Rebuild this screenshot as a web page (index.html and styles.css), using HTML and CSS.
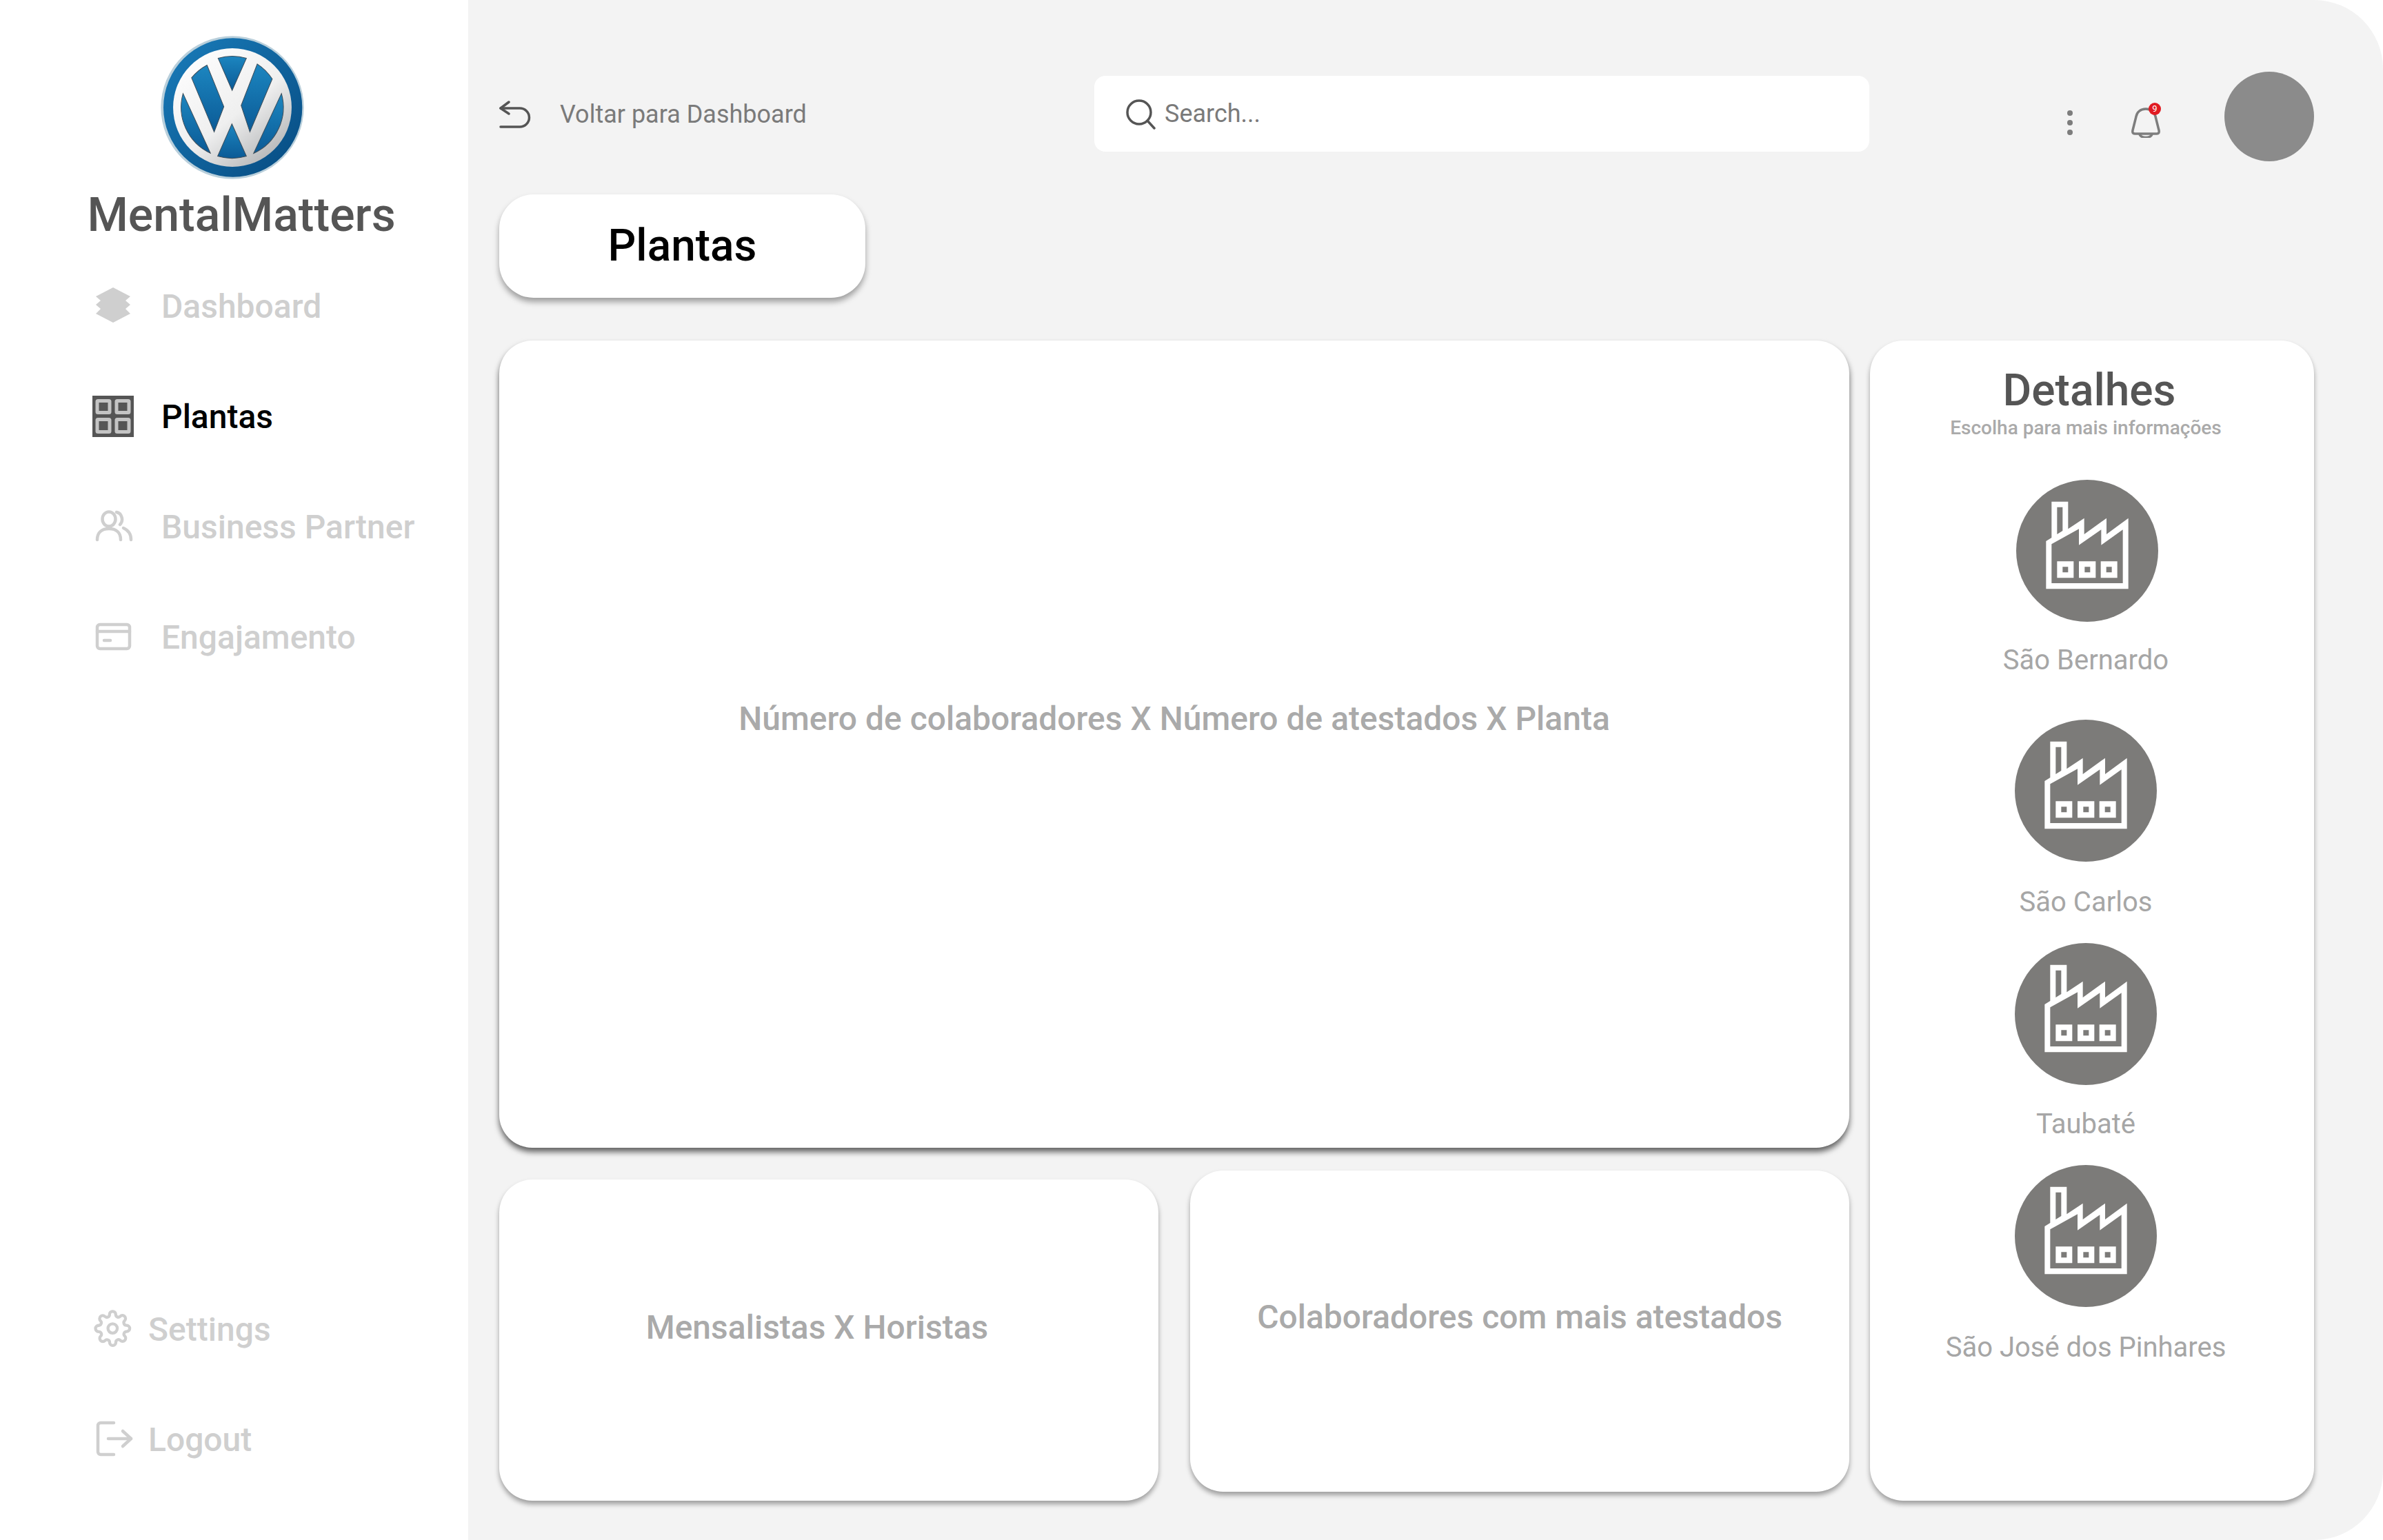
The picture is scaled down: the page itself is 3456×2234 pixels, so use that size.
FILE: index.html
```html
<!DOCTYPE html>
<html lang="pt-BR">
<head>
  <meta charset="UTF-8">
  <title>MentalMatters - Plantas</title>
  <link rel="stylesheet" href="styles.css">
</head>
<body>
  <svg class="sprite" width="0" height="0">
    <!-- icone de fabrica usado nas plantas -->
    <symbol id="factory" viewBox="132 48 618 618">
      <circle cx="441" cy="357" r="309" fill="#7c7b79"/>
      <path fill="#fff" fill-rule="evenodd" d="M262 523H620V215L525 285V215L428 285V215L358 262V143H286V300L262 315ZM286 328L405 262V332L502 265V332L596 265V498H286ZM310 167H334V270L310 285ZM310 403H382V475H310ZM334 427V451H358V427ZM405 403H478V475H405ZM430 427V451H454V427ZM500 403H572V475H500ZM524 427V451H548V427Z"/>
    </symbol>
  </svg>

  <div class="app">
    <!-- Menu lateral -->
    <aside class="sidebar">
      <svg class="logo" viewBox="72 68 620 622">
        <defs>
          <linearGradient id="ringBlue" x1="0" y1="0" x2="1" y2="1">
            <stop offset="0" stop-color="#1a7dbb"/>
            <stop offset="1" stop-color="#064a80"/>
          </linearGradient>
          <linearGradient id="silver" x1="0.1" y1="0" x2="0.9" y2="1">
            <stop offset="0" stop-color="#ffffff"/>
            <stop offset="0.55" stop-color="#efefef"/>
            <stop offset="1" stop-color="#a9abad"/>
          </linearGradient>
          <linearGradient id="innerBlue" x1="0" y1="0" x2="0" y2="1">
            <stop offset="0" stop-color="#1c86c0"/>
            <stop offset="1" stop-color="#0b5a96"/>
          </linearGradient>
        </defs>
        <circle cx="382" cy="379" r="310" fill="#b9cfdb"/>
        <circle cx="384" cy="379" r="301" fill="url(#ringBlue)"/>
        <circle cx="382" cy="379" r="257" fill="url(#silver)"/>
        <g fill="url(#innerBlue)" stroke="#3c4d5a" stroke-width="3">
          <path d="M320 165A220 220 0 0 1 443 165L381 305Z"/>
          <path d="M205 250A220 220 0 0 1 272 195L345 375L303 485Z"/>
          <path d="M490 190A220 220 0 0 1 555 255L458 485L420 370Z"/>
          <path d="M168 318A220 220 0 0 0 287 577Z"/>
          <path d="M595 318A220 220 0 0 1 474 578Z"/>
          <path d="M380 450L443 590A220 220 0 0 1 318 590Z"/>
        </g>
      </svg>
      <div class="brand">MentalMatters</div>

      <nav class="nav">
        <a class="nav-item">
          <span class="nav-icon">
            <svg width="60" height="60" viewBox="0 0 60 60"><path fill="#cfcfcf" d="M30 3L55 16L48 22L55 28L48 34L55 41L30 54L5 41L12 34L5 28L12 22L5 16Z"/></svg>
          </span>
          Dashboard
        </a>
        <a class="nav-item active">
          <span class="nav-icon">
            <svg width="60" height="60" viewBox="0 0 60 60">
              <rect width="60" height="60" fill="#555"/>
              <g fill="none" stroke="#c4c4c4" stroke-width="5">
                <rect x="7" y="7.5" width="18" height="17" rx="1"/>
                <rect x="35" y="7.5" width="18" height="17" rx="1"/>
                <rect x="7" y="34.5" width="18" height="18" rx="1"/>
                <rect x="35" y="34.5" width="18" height="18" rx="1"/>
              </g>
            </svg>
          </span>
          Plantas
        </a>
        <a class="nav-item">
          <span class="nav-icon">
            <svg width="60" height="60" viewBox="0 0 60 60" fill="none" stroke="#cfcfcf" stroke-width="4.5" stroke-linecap="round">
              <ellipse cx="24" cy="19" rx="9.5" ry="10.5"/>
              <path d="M7 49C7 38 14 33 24 33S41 38 41 49"/>
              <path d="M35 9A9.5 10.5 0 0 1 40 27"/>
              <path d="M45 32C52 35 56 41 56 49"/>
            </svg>
          </span>
          Business Partner
        </a>
        <a class="nav-item">
          <span class="nav-icon">
            <svg width="60" height="60" viewBox="0 0 60 60" fill="none" stroke="#cfcfcf" stroke-width="4.5" stroke-linecap="round">
              <rect x="7" y="12" width="47" height="35" rx="4"/>
              <path d="M7 22H54"/>
              <path d="M17 35H26"/>
            </svg>
          </span>
          Engajamento
        </a>
      </nav>

      <div class="nav-bottom">
        <a class="nav-item">
          <span class="nav-icon">
            <svg width="60" height="60" viewBox="0 0 26.6 26.6" fill="none" stroke="#cfcfcf" stroke-width="1.9" stroke-linecap="round" stroke-linejoin="round">
              <g transform="translate(1 0.9)">
                <circle cx="12" cy="12" r="3"/>
                <path d="M19.4 15a1.65 1.65 0 0 0 .33 1.82l.06.06a2 2 0 0 1 0 2.83 2 2 0 0 1-2.83 0l-.06-.06a1.65 1.65 0 0 0-1.82-.33 1.65 1.65 0 0 0-1 1.51V21a2 2 0 0 1-2 2 2 2 0 0 1-2-2v-.09A1.65 1.65 0 0 0 9 19.4a1.65 1.65 0 0 0-1.82.33l-.06.06a2 2 0 0 1-2.83 0 2 2 0 0 1 0-2.83l.06-.06a1.65 1.65 0 0 0 .33-1.82 1.65 1.65 0 0 0-1.51-1H3a2 2 0 0 1-2-2 2 2 0 0 1 2-2h.09A1.65 1.65 0 0 0 4.6 9a1.65 1.65 0 0 0-.33-1.82l-.06-.06a2 2 0 0 1 0-2.83 2 2 0 0 1 2.83 0l.06.06a1.65 1.65 0 0 0 1.82.33H9a1.65 1.65 0 0 0 1-1.51V3a2 2 0 0 1 2-2 2 2 0 0 1 2 2v.09a1.65 1.65 0 0 0 1 1.51 1.65 1.65 0 0 0 1.82-.33l.06-.06a2 2 0 0 1 2.83 0 2 2 0 0 1 0 2.83l-.06.06a1.65 1.65 0 0 0-.33 1.82V9a1.65 1.65 0 0 0 1.51 1H21a2 2 0 0 1 2 2 2 2 0 0 1-2 2h-.09a1.65 1.65 0 0 0-1.51 1z"/>
              </g>
            </svg>
          </span>
          Settings
        </a>
        <a class="nav-item">
          <span class="nav-icon">
            <svg width="60" height="60" viewBox="0 0 60 60" fill="none" stroke="#cfcfcf" stroke-width="4.5" stroke-linecap="round" stroke-linejoin="round">
              <path d="M31 6H12A4 4 0 0 0 8 10V48A4 4 0 0 0 12 52H31"/>
              <path d="M23 29H56"/>
              <path d="M44 18L56 29L44 40"/>
            </svg>
          </span>
          Logout
        </a>
      </div>
    </aside>

    <main class="main">
      <header class="topbar">
        <a class="back-link">
          <svg width="46" height="40" viewBox="0 0 46 40" fill="none" stroke="#555" stroke-width="3.5" stroke-linecap="round" stroke-linejoin="round">
            <path d="M14 2L2 11L14 19"/>
            <path d="M2 11H30A13.5 13.5 0 0 1 30 38H2"/>
          </svg>
          Voltar para Dashboard
        </a>
        <div class="search">
          <svg width="46" height="46" viewBox="0 0 46 46" fill="none" stroke="#555" stroke-width="3.5" stroke-linecap="round">
            <circle cx="21" cy="21" r="17"/>
            <path d="M33 33L43 44"/>
          </svg>
          <span>Search...</span>
        </div>
        <div class="dots"><i></i><i></i><i></i></div>
        <div class="bell">
          <svg width="42" height="44" viewBox="0 0 42 44" fill="none" stroke="#7d7d7d" stroke-width="3.5" stroke-linejoin="round">
            <path d="M21 2C13 2 8 7 7 13L2 33Q1 38 5 38H37Q41 38 40 33L35 13C34 7 29 2 21 2Z"/>
            <path d="M12 38A9 5.5 0 0 0 30 38"/>
          </svg>
          <span class="badge">9</span>
        </div>
        <div class="avatar"></div>
      </header>

      <h1 class="page-title">Plantas</h1>

      <div class="content">
        <div class="charts">
          <section class="card card-main">Número de colaboradores X Número de atestados X Planta</section>
          <div class="charts-row">
            <section class="card card-left">Mensalistas X Horistas</section>
            <section class="card card-right">Colaboradores com mais atestados</section>
          </div>
        </div>

        <section class="details">
          <h2 class="details-title">Detalhes</h2>
          <p class="details-sub">Escolha para mais informações</p>

          <div class="plant plant-1">
            <svg class="plant-icon"><use href="#factory"/></svg>
            <span>São Bernardo</span>
          </div>
          <div class="plant plant-2">
            <svg class="plant-icon"><use href="#factory"/></svg>
            <span>São Carlos</span>
          </div>
          <div class="plant plant-3">
            <svg class="plant-icon"><use href="#factory"/></svg>
            <span>Taubaté</span>
          </div>
          <div class="plant plant-4">
            <svg class="plant-icon"><use href="#factory"/></svg>
            <span>São José dos Pinhares</span>
          </div>
        </section>
      </div>
    </main>
  </div>
</body>
</html>
```
FILE: styles.css
```css
* {
  box-sizing: border-box;
}

body {
  margin: 0;
  background-color: #fff;
  font-family: Roboto, "Noto Sans", sans-serif;
}

.sprite {
  display: block;
  height: 0;
}

.app {
  display: flex;
  height: 2234px;
}

/* Menu lateral */
.sidebar {
  width: 679px;
  flex-shrink: 0;
  display: flex;
  flex-direction: column;
  background-color: #fff;
}

.logo {
  display: block;
  width: 208px;
  height: 208px;
  margin: 52px 0 0 233px;
}

.brand {
  margin-top: 18px;
  padding-left: 21px;
  height: 68px;
  line-height: 68px;
  font-size: 68px;
  font-weight: 500;
  color: #555;
  text-align: center;
}

.nav {
  display: flex;
  flex-direction: column;
  gap: 100px;
  margin-top: 68px;
  padding-left: 134px;
}

.nav-item {
  display: flex;
  align-items: center;
  height: 60px;
  font-size: 48px;
  font-weight: 500;
  color: #cfcfcf;
}

.nav-item.active {
  color: #000;
}

.nav-icon {
  display: flex;
  align-items: center;
  width: 60px;
  height: 60px;
  margin-right: 40px;
}

.nav-bottom {
  display: flex;
  flex-direction: column;
  gap: 100px;
  margin-top: auto;
  padding: 0 0 116px 134px;
}

.nav-bottom .nav-icon {
  margin-right: 21px;
}

/* Area principal */
.main {
  flex: 1;
  padding: 104px 100px 0 45px;
  background-color: #f3f3f3;
  border-radius: 0 100px 100px 0;
}

.topbar {
  display: flex;
  align-items: center;
  height: 130px;
}

.back-link {
  display: flex;
  align-items: center;
  gap: 42px;
  width: 863px;
  margin-top: -6px;
  font-size: 36px;
  color: #7a7a7a;
}

.search {
  display: flex;
  align-items: center;
  gap: 12px;
  width: 1124px;
  height: 110px;
  margin-top: -8px;
  padding-left: 44px;
  border-radius: 16px;
  background-color: #fff;
  font-size: 36px;
  color: #7a7a7a;
}

.dots {
  display: flex;
  flex-direction: column;
  gap: 6px;
  margin: 18px 0 0 287px;
}

.dots i {
  display: block;
  width: 8px;
  height: 8px;
  border-radius: 50%;
  background-color: #7d7d7d;
}

.bell {
  position: relative;
  width: 42px;
  height: 44px;
  margin: 18px 0 0 85px;
}

.badge {
  position: absolute;
  top: -7px;
  right: -1px;
  width: 18px;
  height: 18px;
  border-radius: 50%;
  background-color: #e11b22;
  color: #fff;
  font-size: 13px;
  line-height: 18px;
  text-align: center;
}

.avatar {
  width: 130px;
  height: 130px;
  margin-left: auto;
  border-radius: 50%;
  background-color: #8b8b8b;
}

.page-title {
  width: 531px;
  height: 150px;
  margin: 48px 0 0;
  border-radius: 50px;
  background-color: #fff;
  box-shadow: 0 6px 8px rgba(0, 0, 0, 0.35);
  color: #000;
  font-size: 64px;
  font-weight: 500;
  line-height: 150px;
  text-align: center;
}

.content {
  display: flex;
  gap: 30px;
  margin-top: 62px;
}

.charts {
  width: 1958px;
}

.card {
  display: flex;
  align-items: center;
  justify-content: center;
  border-radius: 48px;
  background-color: #fff;
  color: #aaa;
  font-size: 48px;
  font-weight: 500;
  box-shadow: 0 5px 7px rgba(0, 0, 0, 0.35);
}

.card-main {
  height: 1171px;
  padding-bottom: 74px;
  box-shadow: 0 6px 8px rgba(0, 0, 0, 0.6);
}

.charts-row {
  display: flex;
  gap: 46px;
}

.card-left,
.card-right {
  width: 956px;
  height: 466px;
  padding-bottom: 40px;
}

.card-left {
  margin-top: 46px;
  padding-right: 34px;
  padding-bottom: 38px;
}

.card-right {
  margin-top: 33px;
  padding-bottom: 41px;
}

/* Painel de detalhes */
.details {
  width: 644px;
  height: 1683px;
  padding-right: 18px;
  display: flex;
  flex-direction: column;
  align-items: center;
  border-radius: 48px;
  background-color: #fff;
  box-shadow: 0 5px 7px rgba(0, 0, 0, 0.35);
}

.details-title {
  margin: 38px 0 0 10px;
  height: 70px;
  line-height: 70px;
  color: #555;
  font-size: 64px;
  font-weight: 500;
}

.details-sub {
  margin: 4px 0 0;
  height: 30px;
  line-height: 30px;
  color: #aaa;
  font-size: 28px;
  font-weight: 500;
}

.plant {
  display: flex;
  flex-direction: column;
  align-items: center;
  color: #a6a6a6;
  font-size: 40px;
  line-height: 50px;
}

.plant-icon {
  display: block;
  width: 206px;
  height: 206px;
}

.plant-1 {
  margin-top: 60px;
  gap: 31px;
}

.plant-1 .plant-icon {
  margin-left: 4px;
}

.plant-2 {
  margin-top: 61px;
  gap: 34px;
}

.plant-3 {
  margin-top: 34px;
  gap: 32px;
}

.plant-4 {
  margin-top: 34px;
  gap: 34px;
}
```
